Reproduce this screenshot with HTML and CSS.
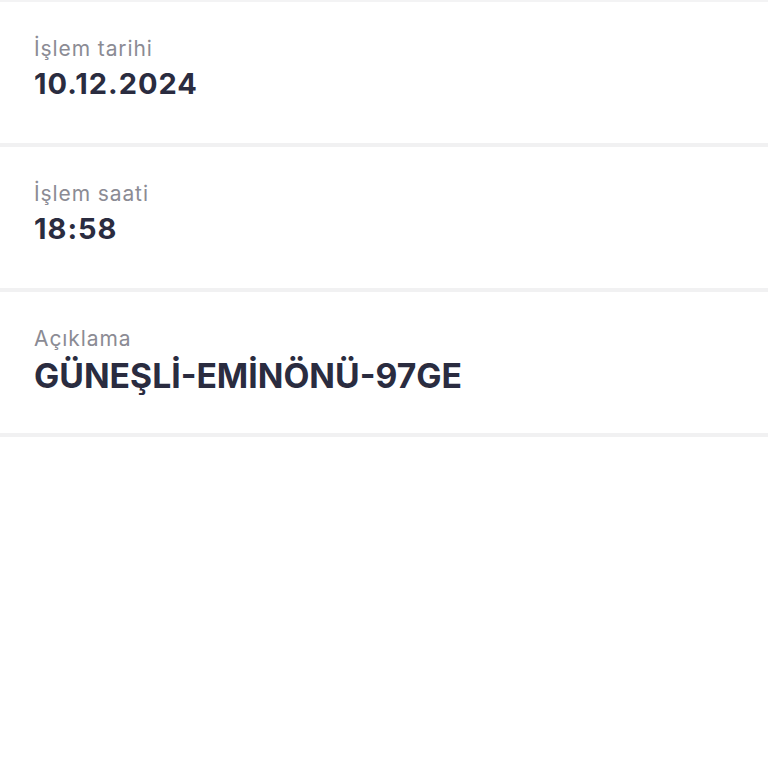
FILE: index.html
```html
<!DOCTYPE html>
<html lang="tr">
  <head>
    <meta charset="UTF-8" />
    <meta name="viewport" content="width=device-width, initial-scale=1.0" />
    <title>İşlem detayı</title>
    <link rel="stylesheet" href="styles.css">
  </head>
  <body>
    <div class="details">
      <div class="row">
        <div class="label">İşlem tarihi</div>
        <div class="value">10.12.2024</div>
      </div>
      <div class="row">
        <div class="label">İşlem saati</div>
        <div class="value">18:58</div>
      </div>
      <div class="row">
        <div class="label">Açıklama</div>
        <div class="value value-text">GÜNEŞLİ-EMİNÖNÜ-97GE</div>
      </div>
    </div>
  </body>
</html>
```

FILE: styles.css
```css
body {
  margin: 0;
  background-color: #fff;
  font-family: Inter, Lato, sans-serif;
}

.details {
  display: flex;
  flex-direction: column;
  border-top: 2px solid #f3f3f4;
}

/* her satırın altında kalın açık gri çizgi */
.row {
  display: flex;
  flex-direction: column;
  gap: 2px;
  height: 145px;
  padding: 33px 34px 0;
  box-sizing: border-box;
  border-bottom: 4px solid #f1f1f2;
}

.label {
  font-size: 21px;
  color: #8b8b94;
  line-height: 28px;
  letter-spacing: 0.9px;
}

.value {
  font-size: 29px;
  font-weight: 700;
  color: #2a2c40;
  line-height: 38px;
  letter-spacing: 1px;
}

/* açıklama satırı biraz daha büyük yazılıyor */
.value-text {
  font-size: 33.7px;
  letter-spacing: 0;
  margin-top: 2px;
}
```
